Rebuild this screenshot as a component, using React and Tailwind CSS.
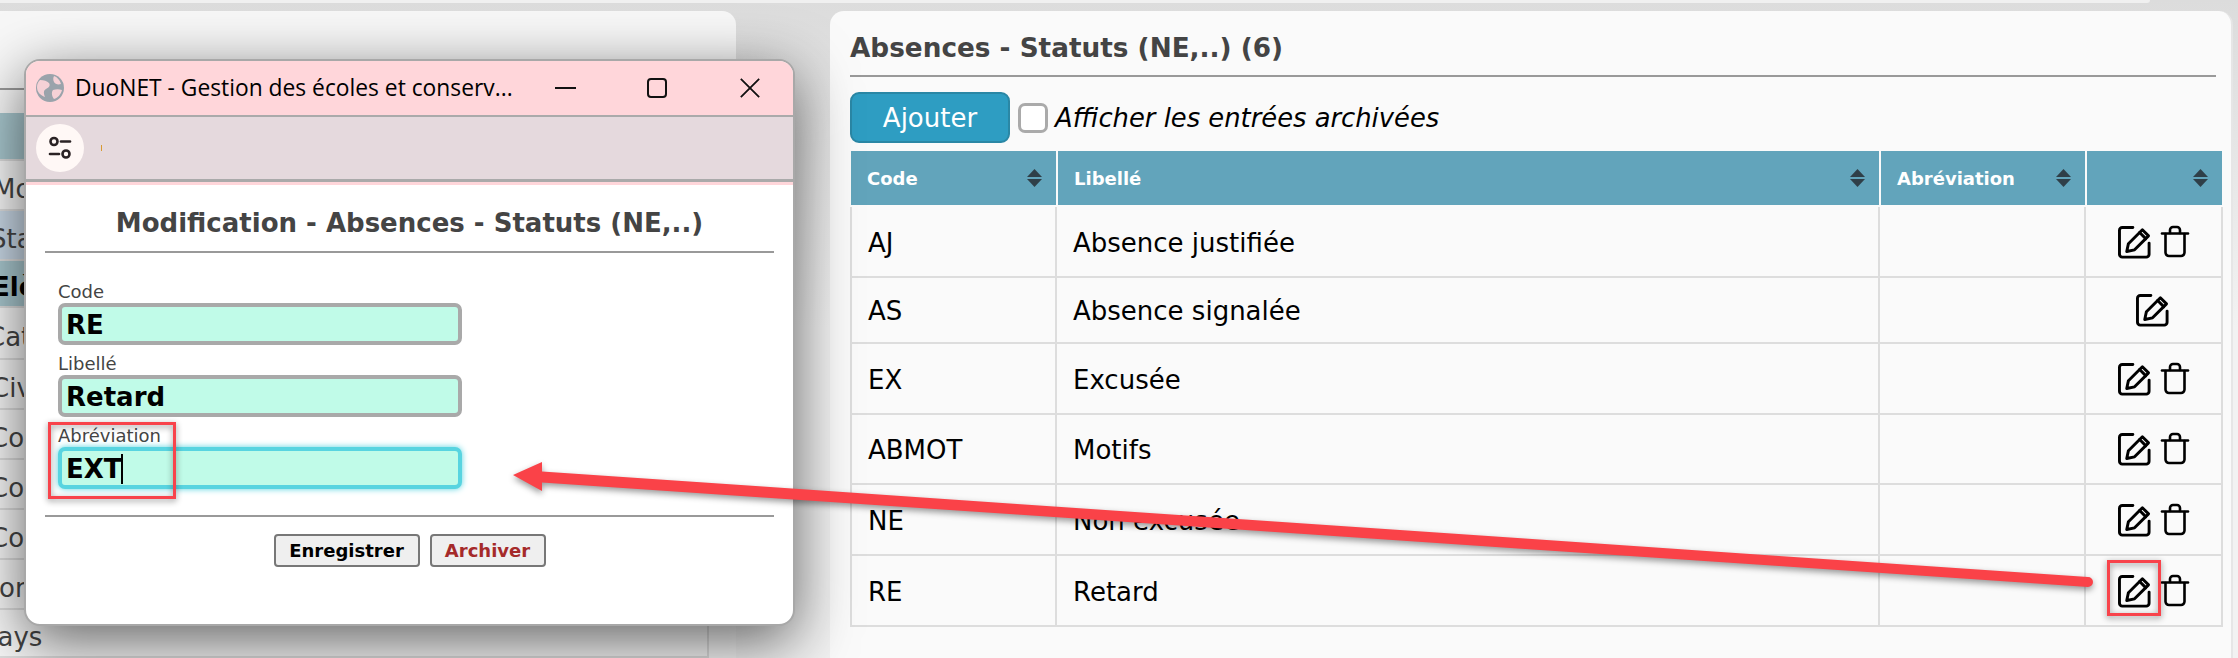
import React from "react";

const dv = "font-['DejaVu_Sans','Liberation_Sans',sans-serif]";

function EditIcon() {
  return (
    <svg width="38" height="38" viewBox="0 0 34 34" fill="none" stroke="#000" strokeWidth="2.600" strokeLinejoin="round" strokeLinecap="round">
      <path d="M16 4H6.500A2.500 2.500 0 0 0 4 6.500V28a2.500 2.500 0 0 0 2.500 2.500H28a2.500 2.500 0 0 0 2.500-2.500V18" />
      <path d="M12 18.500 24.500 6l5.500 5.500L17.500 24 10.500 25.500z" />
      <path d="M22 8.500l5.500 5.500" />
    </svg>
  );
}

function TrashIcon() {
  return (
    <svg width="30" height="34" viewBox="0 0 30 34" fill="none" stroke="#000" strokeWidth="2.600" strokeLinejoin="round" strokeLinecap="round">
      <path d="M2 8.500H28" />
      <path d="M10 8V5a3 3 0 0 1 3-3h4a3 3 0 0 1 3 3v3" />
      <path d="M5.500 9V27.500a3.500 3.500 0 0 0 3.500 3.500H21a3.500 3.500 0 0 0 3.500-3.500V9" />
    </svg>
  );
}

function SortIcon() {
  return (
    <svg width="15" height="18" viewBox="0 0 15 18" fill="#2f3f48">
      <path d="M7.500 0 15 8H0z" />
      <path d="M0 10h15L7.500 18z" />
    </svg>
  );
}

const leftRows = [
  { t: "", h: "h-[48px]", c: "bg-[#a9c8cf]", o: "" },
  { t: "Mo", h: "h-[50px]", c: "", o: "ml-[-7px]" },
  { t: "Sta", h: "h-[50px]", c: "bg-[#c9d8e6]", o: "ml-[-10px]" },
  { t: "Elè", h: "h-[47px]", c: "bg-[#a9c8cf] font-bold text-black", o: "ml-[-8px]" },
  { t: "Cat", h: "h-[52px]", c: "", o: "ml-[-13px]" },
  { t: "Civ", h: "h-[50px]", c: "", o: "ml-[-9px]" },
  { t: "Coo", h: "h-[50px]", c: "", o: "ml-[-10px]" },
  { t: "Coo", h: "h-[50px]", c: "", o: "ml-[-10px]" },
  { t: "Con", h: "h-[50px]", c: "", o: "ml-[-10px]" },
  { t: "For", h: "h-[50px]", c: "", o: "ml-[-15px]" },
  { t: "Pays", h: "h-[48px]", c: "border-b-0", o: "ml-[-17px]" },
];

const rows = [
  { code: "AJ", label: "Absence justifiée", h: "h-[71px]", trash: true },
  { code: "AS", label: "Absence signalée", h: "h-[66px]", trash: false },
  { code: "EX", label: "Excusée", h: "h-[71px]", trash: true },
  { code: "ABMOT", label: "Motifs", h: "h-[70px]", trash: true },
  { code: "NE", label: "Non excusée", h: "h-[71px]", trash: true },
  { code: "RE", label: "Retard", h: "h-[71px]", trash: true },
];

function Field({ label, value, focus }) {
  return (
    <div className="flex flex-col">
      <label className="text-[18px] leading-[18px] text-[#444] h-[20px]">{label}</label>
      <div className={`flex items-center w-[404px] h-[42px] rounded-[7px] border-[4px] bg-[#c0fbe8] pl-[4px] pt-[2px] text-[26px] font-bold text-black ${focus ? "border-[#58d4e0] shadow-[0_0_6px_#58d4e0]" : "border-[#a9a9a9]"}`}>
        {value}
        {focus && <span className="inline-block w-[2px] h-[30px] bg-black ml-[-1px]" />}
      </div>
    </div>
  );
}

export default function App() {
  return (
    <div className={`relative w-[2238px] h-[658px] overflow-hidden bg-gradient-to-b from-[#dcdcdc] via-[#f2f2f2] to-[#f2f2f2] ${dv}`}>
      <div className="absolute left-0 top-0 w-[2150px] h-[3px] rounded-br-[10px] bg-[#f0f0f0]" />
      <div className="flex pt-[11px] h-full">
        <div className="w-[736px] h-full rounded-tr-[14px] bg-[#f7f7f7] shrink-0 relative overflow-hidden">
          <div className="h-[79px] border-b-2 border-[#999] w-full" />
          <div className="h-[23px]" />
          <div className="w-[709px] flex flex-col border-r-2 border-[#ddd]">
            {leftRows.map((r, i) => (
              <div key={i} className={`${r.h} ${r.c} flex items-center pt-[8px] text-[26px] text-[#444] border-b-2 border-[#ddd]`}>
                <span className={r.o}>{r.t}</span>
              </div>
            ))}
          </div>
        </div>

        <div className="ml-[94px] w-[1403px] h-full rounded-tl-[14px] rounded-tr-[14px] bg-[#fafafa] border-r-2 border-[#e6e6e6] pl-[20px] shrink-0">
          <div className="h-[66px] border-b-2 border-[#999] mr-[15px] flex items-center pt-[12px]">
            <h1 className="text-[26.300px] font-bold text-[#444]">Absences - Statuts (NE,..) (6)</h1>
          </div>
          <div className="flex items-center mt-[15px] h-[51px]">
            <button className="w-[160px] h-[51px] rounded-[9px] bg-[#2e9dc2] border-2 border-[#2a87a5] text-white text-[26px] pt-[2px]">Ajouter</button>
            <span className="ml-[8px] w-[30px] h-[30px] rounded-[7px] border-[3px] border-[#aaa] bg-white" />
            <span className="ml-[7px] pt-[2px] text-[25.800px] italic text-black">Afficher les entrées archivées</span>
          </div>
          <div className="mt-[8px] w-[1372px]">
            <div className="flex gap-[2px] h-[54px] pl-[1px] text-white font-bold text-[18px] bg-[#fafafa]">
              <div className="w-[205px] bg-[#62a4bb] flex items-center justify-between pl-[16px] pr-[14px]"><span>Code</span><SortIcon /></div>
              <div className="w-[821px] bg-[#62a4bb] flex items-center justify-between pl-[16px] pr-[14px]"><span>Libellé</span><SortIcon /></div>
              <div className="w-[204px] bg-[#62a4bb] flex items-center justify-between pl-[16px] pr-[14px]"><span>Abréviation</span><SortIcon /></div>
              <div className="w-[135px] bg-[#62a4bb] flex items-center justify-end pr-[14px]"><SortIcon /></div>
            </div>
            <div className="mt-[2px] border-l-2 border-r-2 border-[#ddd] w-[1373px]">
              {rows.map((r) => (
                <div key={r.code} className={`flex ${r.h} border-b-2 border-[#ddd] text-[26px] text-black`}>
                  <div className="w-[205px] border-r-2 border-[#ddd] flex items-center pl-[16px] pt-[3px]">{r.code}</div>
                  <div className="w-[823px] border-r-2 border-[#ddd] flex items-center pl-[16px] pt-[3px]">{r.label}</div>
                  <div className="w-[206px] border-r-2 border-[#ddd]" />
                  <div className="flex-1 flex items-center justify-center gap-[7px] pr-[3px]">
                    <EditIcon />
                    {r.trash && <TrashIcon />}
                  </div>
                </div>
              ))}
            </div>
          </div>
        </div>
      </div>

      {/* Pop-up window */}
      <div className="absolute left-[24px] top-[59px] w-[771px] h-[567px] rounded-[16px] border-2 border-[#a8a8a8] bg-white overflow-hidden shadow-[0_16px_60px_rgba(0,0,0,0.6)] flex flex-col">
        <div className="h-[56px] shrink-0 bg-[#ffd6da] border-b-2 border-[#aaa] flex items-center pl-[10px] font-['Open_Sans',sans-serif] text-black">
          <svg width="28" height="28" viewBox="0 0 28 28" className="shrink-0">
            <circle cx="14" cy="14" r="14" fill="#9aa3ab" />
            <path d="M4 6c4 0 7 1 9 3 2 3-1 5-3 6s-3 3-1 8c-5-2-8-5-8-10 0-3 1-5 3-7z" fill="#ffd6da" opacity="0.9" />
            <path d="M18 2c3 1 6 4 7 8-3 1-6 0-7-2s-1-4 0-6zM17 16c3-1 6-1 9 0-1 4-4 8-8 9-2-2-3-7-1-9z" fill="#ffd6da" opacity="0.9" />
          </svg>
          <span className="ml-[11px] w-[444px] text-[22.800px] whitespace-nowrap">DuoNET - Gestion des écoles et conserv...</span>
          <svg width="22" height="22" viewBox="0 0 22 22" className="ml-[36px]" stroke="#111" strokeWidth="2" fill="none"><path d="M0 11h21" /></svg>
          <svg width="22" height="26" viewBox="0 0 22 26" className="ml-[69px]" stroke="#111" strokeWidth="2" fill="none"><rect x="2" y="4" width="18" height="18" rx="3" /></svg>
          <svg width="22" height="24" viewBox="0 0 24 24" className="ml-[71px]" stroke="#111" strokeWidth="2" fill="none"><path d="M2 2l20 20M22 2 2 22" /></svg>
        </div>
        <div className="h-[65px] shrink-0 bg-[#e5d9dd] border-b-[3px] border-[#aaa] flex items-center pl-[10px]">
          <div className="w-[48px] h-[48px] rounded-full bg-[#fff8f6] flex items-center justify-center">
            <svg width="26" height="26" viewBox="0 0 26 26" fill="none" stroke="#2a2224" strokeWidth="2.600" strokeLinecap="round">
              <circle cx="7" cy="6.500" r="3.500" />
              <path d="M14 6.500H23" />
              <path d="M3 19H12" />
              <circle cx="19" cy="19" r="3.500" />
            </svg>
          </div>
          <span className="ml-[17px] w-[1px] h-[6px] bg-[#d89a30]" />
        </div>
        <div className="h-[3px] shrink-0 bg-[#ffd6da]" />
        <div className="flex-1 px-[19px] pt-[20px]">
          <h2 className="text-center text-[26px] leading-[36px] font-bold text-[#444] h-[46px]">Modification - Absences - Statuts (NE,..)</h2>
          <div className="border-b-2 border-[#999]" />
          <div className="pl-[13px] pt-[30px] flex flex-col gap-[10px]">
            <Field label="Code" value="RE" />
            <Field label="Libellé" value="Retard" />
            <Field label="Abréviation" value="EXT" focus />
          </div>
          <div className="mt-[26px] border-b-2 border-[#999]" />
          <div className="mt-[17px] flex justify-center gap-[10px]">
            <button className="w-[146px] h-[33px] rounded-[4px] border-2 border-[#777] bg-[#efefef] text-[18px] font-bold text-black">Enregistrer</button>
            <button className="w-[116px] h-[33px] rounded-[4px] border-2 border-[#777] bg-[#efefef] text-[18px] font-bold text-[#a52a2a]">Archiver</button>
          </div>
        </div>
      </div>

      {/* Annotations */}
      <div className="absolute left-[48px] top-[422px] w-[128px] h-[77px] border-[3px] border-[#f8434b] drop-shadow-[0_2px_3px_rgba(0,0,0,0.45)]" />
      <div className="absolute left-[2107px] top-[560px] w-[54px] h-[56px] border-[3px] border-[#f8434b] drop-shadow-[0_2px_3px_rgba(0,0,0,0.45)]" />
      <svg className="absolute left-0 top-0 pointer-events-none drop-shadow-[0_3px_3px_rgba(0,0,0,0.4)]" width="2238" height="658" viewBox="0 0 2238 658">
        <path d="M513 475 542 462 542 471.500 2088 577a5 5 0 0 1 0 10L542 482.500 542 491z" fill="#fa4248" />
      </svg>
    </div>
  );
}
